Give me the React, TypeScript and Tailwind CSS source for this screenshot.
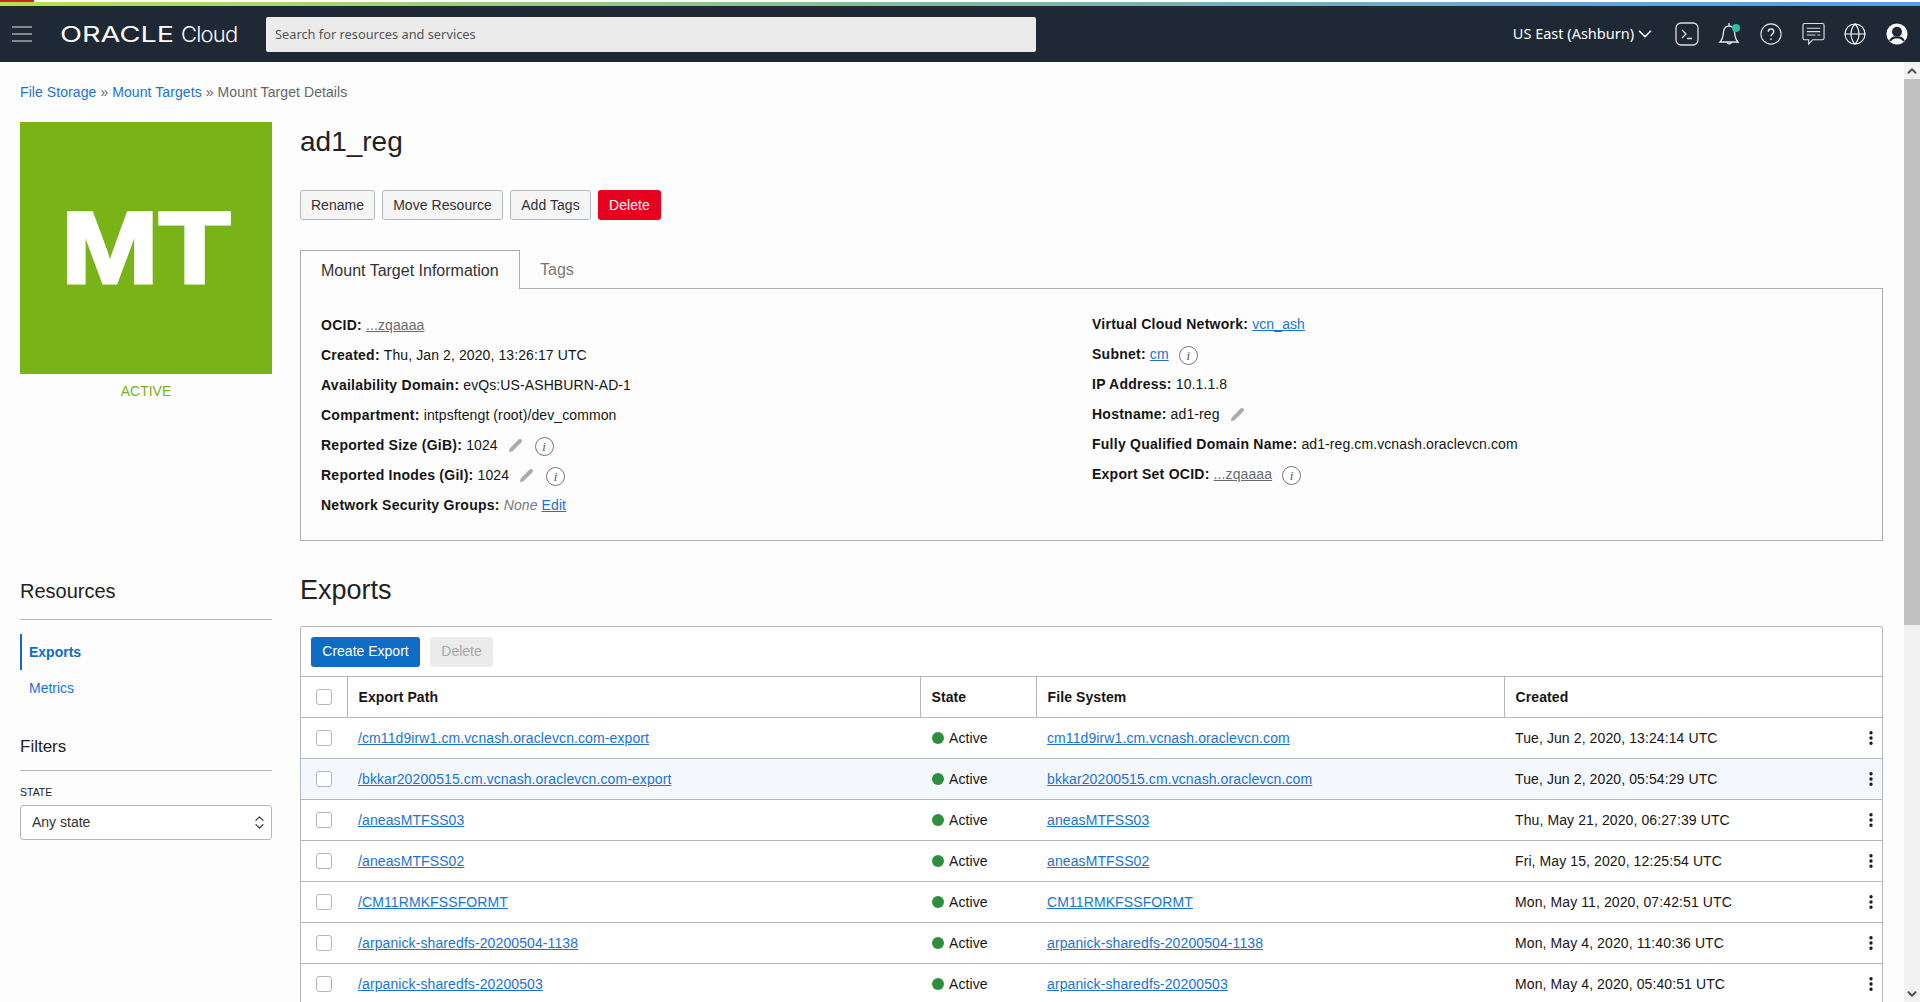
import { ChevronDown, ChevronUp, ChevronsUpDown, EllipsisVertical, Globe, Pencil } from "lucide-react";

const rows = [
  { path: "/cm11d9irw1.cm.vcnash.oraclevcn.com-export", fs: "cm11d9irw1.cm.vcnash.oraclevcn.com", created: "Tue, Jun 2, 2020, 13:24:14 UTC" },
  { path: "/bkkar20200515.cm.vcnash.oraclevcn.com-export", fs: "bkkar20200515.cm.vcnash.oraclevcn.com", created: "Tue, Jun 2, 2020, 05:54:29 UTC", hover: true },
  { path: "/aneasMTFSS03", fs: "aneasMTFSS03", created: "Thu, May 21, 2020, 06:27:39 UTC" },
  { path: "/aneasMTFSS02", fs: "aneasMTFSS02", created: "Fri, May 15, 2020, 12:25:54 UTC" },
  { path: "/CM11RMKFSSFORMT", fs: "CM11RMKFSSFORMT", created: "Mon, May 11, 2020, 07:42:51 UTC" },
  { path: "/arpanick-sharedfs-20200504-1138", fs: "arpanick-sharedfs-20200504-1138", created: "Mon, May 4, 2020, 11:40:36 UTC" },
  { path: "/arpanick-sharedfs-20200503", fs: "arpanick-sharedfs-20200503", created: "Mon, May 4, 2020, 05:40:51 UTC" },
];

function InfoIcon() {
  return (
    <span className="w-[19px] h-[19px] mt-[2px] shrink-0 rounded-full border border-[#777] flex items-center justify-center italic font-['Liberation_Serif',serif] text-[13px] leading-none text-[#555]">
      i
    </span>
  );
}

function Edit() {
  return <Pencil size={15} fill="#aaa" strokeWidth={1} className="text-[#aaa] shrink-0" />;
}

function Field({ label, children }: { label: string; children: React.ReactNode }) {
  return (
    <div className="h-[30px] flex items-center gap-1 whitespace-pre text-[14px] tracking-[0.1px] text-[#161513]">
      <b className="tracking-[0.25px]">{label}</b>
      {children}
    </div>
  );
}

function TopBar() {
  return (
    <header className="h-[56px] bg-[#1e2935] flex items-center text-white font-['Noto_Sans',sans-serif]">
      <svg width="20" height="16" viewBox="0 0 20 16" className="ml-[12px]" stroke="#e8e8e8" strokeWidth="1.2">
        <path d="M0 1h20M0 8h20M0 15h20" />
      </svg>
      <div className="ml-[28px] w-[178px] flex items-center leading-none font-['Inter',sans-serif]">
        <span className="w-[121px] shrink-0 text-[21px] font-normal origin-left scale-x-[1.37]">ORACLE</span>
        <span className="font-light text-[22px] tracking-[-0.8px]">Cloud</span>
      </div>
      <div className="ml-[28px] w-[770px] h-[35px] bg-[#ebebeb] rounded-[2px] flex items-center pl-[9px] pt-[1px] text-[12.8px] text-[#555]">
        Search for resources and services
      </div>
      <div className="ml-auto flex items-center">
        <span className="text-[14.5px]">US East (Ashburn)</span>
        <ChevronDown size={22} strokeWidth={1.8} />
        <svg width="24" height="24" viewBox="0 0 24 24" fill="none" stroke="#ddd" strokeWidth="1.3" className="ml-[19px]">
          <rect x="1" y="1" width="22" height="22" rx="5" />
          <path d="M7 8l4 4-4 4M12 16.500h5" />
        </svg>
        <svg width="24" height="26" viewBox="0 0 24 26" fill="none" stroke="#e8e8e8" strokeWidth="1.3" className="ml-[19px]">
          <path d="M2 21c3-3 3-6 3.500-10 .5-4 3-6 5.500-6s5 2 5.500 6c.5 4 .5 7 3.500 10zM9 21.500a2.500 2.500 0 0 0 4.500 0M11 5V2" />
          <circle cx="18" cy="7" r="4" fill="#2ebd9d" stroke="none" />
        </svg>
        <svg width="22" height="22" viewBox="0 0 24 24" fill="none" stroke="#e8e8e8" strokeWidth="1.2" className="ml-[18px]">
          <circle cx="12" cy="12" r="11" />
          <path d="M9 9.500c0-4 6-4 6 0 0 2.500-3 2.500-3 5M12 17v1.500" strokeWidth="1.6" />
        </svg>
        <svg width="23" height="24" viewBox="0 0 24 24" fill="none" stroke="#ddd" strokeWidth="1.2" className="ml-[20px]">
          <path d="M2.500 1h19a1.500 1.500 0 0 1 1.500 1.500v14a1.500 1.500 0 0 1-1.500 1.500H11l-4 4.500V18H2.500A1.500 1.500 0 0 1 1 16.500v-14A1.500 1.500 0 0 1 2.500 1z" />
          <path d="M5 6h14M5 9.500h14M5 13h9M16 13h3" />
        </svg>
        <Globe size={24} strokeWidth={1.1} className="ml-[18px]" />
        <svg width="22" height="22" viewBox="0 0 24 24" className="ml-[19px] mr-[12px]">
          <circle cx="12" cy="12" r="11.500" fill="#fff" />
          <circle cx="12" cy="9.500" r="5.500" fill="#1e2935" />
          <path d="M3.500 19c2-4 5-4.500 8.500-4.500s6.500.5 8.500 4.500a2 2 0 0 1-2 1c-2-2.500-4-3-6.500-3s-4.500.5-6.500 3a2 2 0 0 1-2-1z" fill="#1e2935" />
        </svg>
      </div>
    </header>
  );
}

function Sidebar() {
  return (
    <aside className="w-[252px] shrink-0">
      <div className="h-[252px] bg-[#79b318] flex items-center justify-center text-white font-bold text-[102px] leading-none">
        <span className="scale-x-[1.15] [-webkit-text-stroke:3px_white]">MT</span>
      </div>
      <p className="mt-[7px] text-center text-[14px] text-[#79b318]">ACTIVE</p>
      <h3 className="mt-[177px] text-[20px] leading-[24px] text-[#222]">Resources</h3>
      <div className="mt-[16px] border-t border-[#b3b8c0]" />
      <div className="mt-[14px] h-[36px] flex items-center border-l-2 border-[#0f6cc4] pl-[7px] text-[14px] font-bold text-[#0f6cc4]">Exports</div>
      <div className="h-[36px] flex items-center pl-[9px] text-[14px] text-[#1a73d4]">Metrics</div>
      <h3 className="mt-[29px] text-[17px] leading-[24px] text-[#222]">Filters</h3>
      <div className="mt-[11px] border-t border-[#b3b8c0]" />
      <p className="mt-[15px] text-[10.5px] leading-[13px] text-[#222]">STATE</p>
      <div className="mt-[6px] h-[35px] bg-white border border-[#b3b8c0] rounded-[3px] flex items-center justify-between pl-[11px] pr-[3px] text-[14px] text-[#333]">
        Any state
        <ChevronsUpDown size={17} strokeWidth={1.7} />
      </div>
    </aside>
  );
}

function Details() {
  return (
    <div className="border border-[#a9aeb6] mt-[-1px] pt-[21px] pl-[20px] grid grid-cols-[771px_1fr] h-[253px]">
      <div>
        <Field label="OCID:"><a className="underline text-[#6b6b6b]">...zqaaaa</a></Field>
        <Field label="Created:">Thu, Jan 2, 2020, 13:26:17 UTC</Field>
        <Field label="Availability Domain:">evQs:US-ASHBURN-AD-1</Field>
        <Field label="Compartment:">intpsftengt (root)/dev_common</Field>
        <Field label="Reported Size (GiB):">1024<span className="w-[2px]" /><Edit /><span className="w-1" /><InfoIcon /></Field>
        <Field label="Reported Inodes (GiI):">1024<span className="w-[2px]" /><Edit /><span className="w-1" /><InfoIcon /></Field>
        <Field label="Network Security Groups:"><i className="text-[#777]">None</i><a className="underline text-[#1a73d4]">Edit</a></Field>
      </div>
      <div className="-mt-[1px]">
        <Field label="Virtual Cloud Network:"><a className="underline text-[#1a73d4]">vcn_ash</a></Field>
        <Field label="Subnet:"><a className="underline text-[#1a73d4]">cm</a><span className="w-[2px]" /><InfoIcon /></Field>
        <Field label="IP Address:">10.1.1.8</Field>
        <Field label="Hostname:">ad1-reg<span className="w-[2px]" /><Edit /></Field>
        <Field label="Fully Qualified Domain Name:">ad1-reg.cm.vcnash.oraclevcn.com</Field>
        <Field label="Export Set OCID:"><a className="underline text-[#6b6b6b]">...zqaaaa</a><span className="w-[2px]" /><InfoIcon /></Field>
      </div>
    </div>
  );
}

function ExportsTable() {
  return (
    <div className="mt-[18px] border border-[#b3b8c0] border-b-0 rounded-t-[3px] bg-white">
      <div className="h-[49px] flex items-center gap-[10px] pl-[10px] text-[14px]">
        <button className="h-[30px] w-[109px] bg-[#0f6cc4] text-white rounded-[3px]">Create Export</button>
        <button className="h-[30px] w-[63px] bg-[#ebebeb] text-[#a8a8a8] rounded-[3px]">Delete</button>
      </div>
      <table className="w-full table-fixed border-collapse text-[14px] tracking-[0.1px] text-[#161513]">
        <colgroup>
          <col className="w-[46px]" />
          <col className="w-[573px]" />
          <col className="w-[116px]" />
          <col className="w-[468px]" />
          <col />
          <col className="w-[36px]" />
        </colgroup>
        <thead>
          <tr className="h-[41px] border-y border-[#b3b8c0] text-left font-bold">
            <th className="border-r border-[#b3b8c0]"><span className="block w-4 h-4 ml-[15px] border border-[#b3b8c0] rounded-[3px]" /></th>
            <th className="pl-[11px] border-r border-[#b3b8c0]">Export Path</th>
            <th className="pl-[11px] border-r border-[#b3b8c0]">State</th>
            <th className="pl-[11px] border-r border-[#b3b8c0]">File System</th>
            <th className="pl-[11px]" colSpan={2}>Created</th>
          </tr>
        </thead>
        <tbody>
          {rows.map((r) => (
            <tr key={r.path} className={`h-[41px] border-b border-[#b3b8c0] ${r.hover ? "bg-[#f4f8fc]" : ""}`}>
              <td><span className="block w-4 h-4 ml-[15px] border border-[#b3b8c0] rounded-[3px] bg-white" /></td>
              <td className="pl-[11px]"><a className="underline text-[#1a73d4]">{r.path}</a></td>
              <td className="pl-[12px]">
                <span className="flex items-center gap-[5px]">
                  <span className="w-3 h-3 rounded-full bg-[#2f8f3f]" />
                  Active
                </span>
              </td>
              <td className="pl-[11px]"><a className="underline text-[#1a73d4]">{r.fs}</a></td>
              <td className="pl-[11px]">{r.created}</td>
              <td><EllipsisVertical size={18} strokeWidth={2.5} className="ml-[16px]" /></td>
            </tr>
          ))}
        </tbody>
      </table>
    </div>
  );
}

export default function App() {
  return (
    <div className="h-[1002px] w-[1920px] overflow-hidden bg-[#fdfdfd] font-['Liberation_Sans',Arial,sans-serif]">
      <div className="h-[6px] bg-white">
        <div className="h-[2px] w-[34px] bg-[#c8242b]" />
        <div className="h-[4px] bg-gradient-to-r from-[#b8e04a] via-[#7fb8a0] to-[#559af0]" />
      </div>
      <TopBar />
      <div className="flex">
        <main className="w-[1904px] pl-[20px] pr-[21px] shrink-0">
          <nav className="pt-[21px] h-[60px] text-[14px] tracking-[0.08px] leading-[18px] text-[#666]">
            <a className="text-[#1a73d4]">File Storage</a> » <a className="text-[#1a73d4]">Mount Targets</a> » Mount Target Details
          </nav>
          <div className="flex gap-[28px]">
            <Sidebar />
            <div className="flex-1 min-w-0">
              <h1 className="text-[28px] leading-[34px] text-[#222] mt-[3px]">ad1_reg</h1>
              <div className="mt-[31px] flex gap-[7px] text-[14px] tracking-[0.05px]">
                <button className="h-[30px] w-[75px] bg-[#f5f5f5] border border-[#b3b8c0] rounded-[3px] text-[#333]">Rename</button>
                <button className="h-[30px] w-[121px] bg-[#f5f5f5] border border-[#b3b8c0] rounded-[3px] text-[#333]">Move Resource</button>
                <button className="h-[30px] w-[81px] bg-[#f5f5f5] border border-[#b3b8c0] rounded-[3px] text-[#333]">Add Tags</button>
                <button className="h-[30px] w-[63px] bg-[#e8001f] rounded-[3px] text-white">Delete</button>
              </div>
              <div className="mt-[30px] flex text-[16px]">
                <div className="relative z-10 w-[220px] h-[39px] border border-b-0 border-[#a9aeb6] bg-[#fdfdfd] flex items-center pl-[20px] pt-[2px] text-[#333]">Mount Target Information</div>
                <div className="flex-1 h-[39px] border-b border-[#a9aeb6] pl-[20px] pt-[8px] text-[#777]">Tags</div>
              </div>
              <Details />
              <h2 className="mt-[31px] text-[27px] leading-[36px] text-[#222]">Exports</h2>
              <ExportsTable />
            </div>
          </div>
        </main>
        <div className="w-[16px] h-[940px] bg-[#f1f1f1] flex flex-col items-center text-[#555]">
          <ChevronUp size={14} strokeWidth={3.5} className="mt-[2px] mb-[1px]" />
          <div className="w-full h-[546px] bg-[#c1c1c1]" />
          <ChevronDown size={14} strokeWidth={3.5} className="mt-auto mb-[1px]" />
        </div>
      </div>
    </div>
  );
}
